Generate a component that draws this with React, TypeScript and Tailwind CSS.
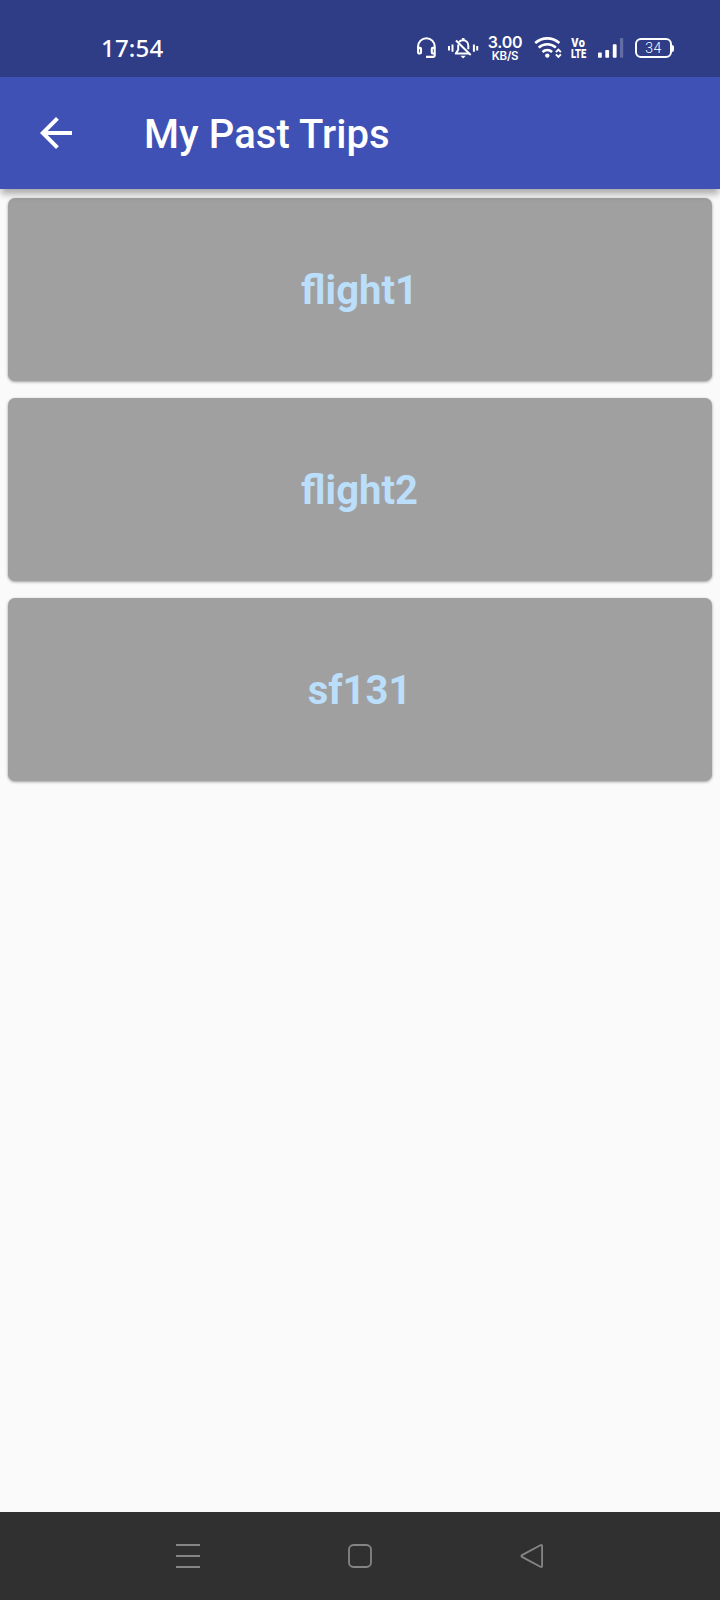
import React from "react";

const trips = ["flight1", "flight2", "sf131"];

function HeadphonesIcon() {
  return (
    <svg className="h-6 w-6 shrink-0" viewBox="0 0 24 24" fill="none" stroke="currentColor" strokeWidth="2.1">
      <path d="M3.1 14V10.5a8.3 8.3 0 0 1 16.6 0V17.5" />
      <path d="M3.1 11.9h1.9a1 1 0 0 1 1 1v3.6a1 1 0 0 1-1 1H4.1a1 1 0 0 1-1-1z" />
      <path d="M19.7 11.9h-1.9a1 1 0 0 0-1 1v3.6a1 1 0 0 0 1 1h1.9" />
      <path d="M19.7 17v2.5a1.4 1.4 0 0 1-1.4 1.4H11" />
    </svg>
  );
}

function BellOffIcon() {
  return (
    <svg className="h-6 w-8 shrink-0" viewBox="0 0 32 24" fill="none" stroke="currentColor" strokeWidth="2">
      <path d="M2 10v4.4M5.5 8.6v7.2M26.9 8.6v7.2M30.2 10v4.4" strokeWidth="2" />
      <path d="M12 6C13 4.9 14.5 4.3 16.2 4.3c3.1 0 5.1 2.4 5.1 5.5v3.4" />
      <path d="M11.2 8.5v5.3l-2.4 3.8h13" strokeLinejoin="round" />
      <path d="M9 4.5 23.7 19" />
      <path d="M16.2 2v2.5" strokeWidth="2.6" />
      <path d="M13.4 19.8h5.4l-2.7 2.6z" fill="currentColor" stroke="none" />
    </svg>
  );
}

function WifiIcon() {
  return (
    <svg className="h-6 w-[30px] shrink-0" viewBox="0 0 30 24" fill="none" stroke="currentColor" strokeWidth="2.6">
      <path d="M1.2 7C8.5.8 18.1.8 25.4 7" />
      <path d="M4.7 11.6c5-4.5 12.2-4.5 17.2 0" />
      <path d="M8.5 15.9c2.8-2.4 6.8-2.4 9.6 0" />
      <circle cx="13.3" cy="19.6" r="2.2" fill="currentColor" stroke="none" />
      <path d="m21.9 16.2 2.5-2.6 2.5 2.6M21.9 18.4l2.5 2.6 2.5-2.6" strokeWidth="1.9" />
    </svg>
  );
}

function SignalIcon() {
  return (
    <svg className="h-6 w-[26px] shrink-0" viewBox="0 0 26 24" fill="currentColor">
      <rect x="0" y="16.5" width="3.8" height="5.3" rx=".8" />
      <rect x="7.3" y="14" width="3.8" height="7.8" rx=".8" />
      <rect x="14.8" y="8.3" width="3.8" height="13.5" rx=".8" />
      <rect x="22" y="2" width="3.2" height="19.8" rx=".8" opacity=".25" />
    </svg>
  );
}

function StatusBar() {
  return (
    <header className="flex h-[77px] shrink-0 items-start bg-[#2f3c86] pt-9 text-white">
      <span className="ml-[101px] w-[314px] font-['Noto_Sans',sans-serif] text-[24px] font-medium leading-6 tracking-[0.2px]">17:54</span>
      <HeadphonesIcon />
      <div className="ml-2 flex">
        <BellOffIcon />
      </div>
      <div className="ml-2 flex w-[36px] flex-col items-center whitespace-nowrap font-['Inter',sans-serif] font-semibold">
        <span className="text-[16px] leading-[13px] tracking-[-0.3px]">3.00</span>
        <span className="text-[11.5px] leading-[14px] tracking-[-0.2px]">KB/S</span>
      </div>
      <div className="ml-[11px] flex">
        <WifiIcon />
      </div>
      <div className="ml-[5px] flex w-[19px] flex-col items-center pt-[2px] font-['Roboto',sans-serif] text-[13px] font-black leading-[10px]">
        <span className="scale-x-[.84] tracking-[0.5px]">Vo</span>
        <span className="mt-px scale-x-[.72]">LTE</span>
      </div>
      <div className="ml-[10px] flex">
        <SignalIcon />
      </div>
      <div className="ml-[11px] mt-[2px] flex items-center">
        <div className="flex h-5 w-[37px] items-center justify-center rounded-[6px] border-2 border-white font-['Roboto',sans-serif] text-[14px] font-light tracking-[0.4px]">
          34
        </div>
        <div className="h-[7px] w-[2px] rounded-r-sm bg-white" />
      </div>
    </header>
  );
}

function AppBar() {
  return (
    <div className="relative z-10 flex h-[112px] shrink-0 items-center bg-[#3f51b5] text-white shadow-[0_6px_7px_-1px_rgba(0,0,0,0.32)]">
      <button aria-label="Back" className="ml-8 h-12 w-12 shrink-0 pb-px">
        <svg className="h-12 w-12" viewBox="0 0 24 24" fill="currentColor">
          <path d="M20 11H7.83l5.59-5.59L12 4l-8 8 8 8 1.41-1.41L7.83 13H20v-2z" />
        </svg>
      </button>
      <h1 className="ml-16 pt-[3px] text-[40px] font-medium leading-[48px] tracking-[0.08px]">My Past Trips</h1>
    </div>
  );
}

function NavBar() {
  return (
    <nav className="flex h-[88px] shrink-0 items-center justify-between bg-[#303030] px-[174px] text-[#858585]">
      <svg className="h-7 w-7" viewBox="0 0 28 28" fill="none" stroke="currentColor" strokeWidth="2">
        <path d="M2 3h24M2 14h24M2 25h24" />
      </svg>
      <svg className="h-7 w-7" viewBox="0 0 28 28" fill="none" stroke="currentColor" strokeWidth="1.8">
        <rect x="3" y="3" width="22" height="22" rx="4.5" />
      </svg>
      <svg className="h-7 w-7" viewBox="0 0 28 28" fill="none" stroke="currentColor" strokeWidth="1.8" strokeLinejoin="round">
        <path d="M4 13.1 22.4 3.2Q24.1 2.4 24.1 4.4V23.6Q24.1 25.6 22.4 24.8L4 14.9Q2.7 14 4 13.1Z" />
      </svg>
    </nav>
  );
}

export default function App() {
  return (
    <div className="flex h-[1600px] w-[720px] flex-col bg-[#fafafa] font-['Roboto',sans-serif]">
      <StatusBar />
      <AppBar />
      <main className="flex grow flex-col gap-[17px] px-2 pt-[9px]">
        {trips.map((trip) => (
          <div
            key={trip}
            className="flex h-[183px] items-center justify-center rounded-[7px] bg-[#a0a0a0] pr-px pt-[2px] text-[40px] font-bold leading-[48px] text-[#bbdefb] shadow-[0_1px_3px_rgba(0,0,0,0.38)]"
          >
            {trip}
          </div>
        ))}
      </main>
      <NavBar />
    </div>
  );
}
